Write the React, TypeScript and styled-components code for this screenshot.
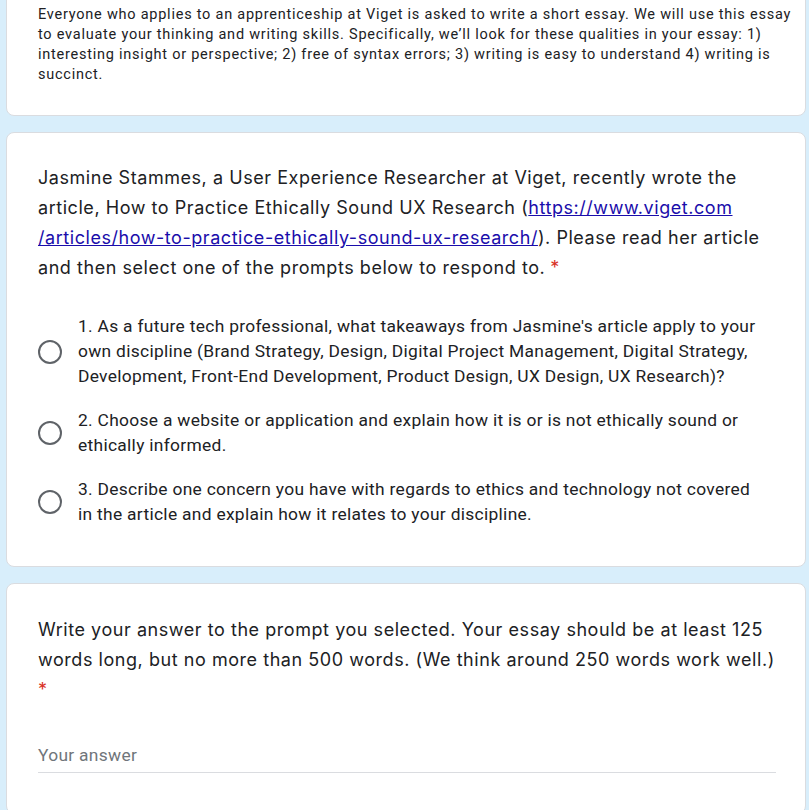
import React from 'react';
import styled, { createGlobalStyle } from 'styled-components';

const GlobalStyle = createGlobalStyle`
  html, body {
    margin: 0;
    padding: 0;
    background: #d8eefb;
  }
  body {
    font-family: Roboto, "Liberation Sans", Arial, sans-serif;
    color: #202124;
    overflow: hidden;
  }
`;

const Page = styled.div`
  display: flex;
  flex-direction: column;
  gap: 16px;
  width: 800px;
  padding-left: 6px;
`;

const Card = styled.section<{ $top?: number; $padTop: number; $padBottom: number }>`
  background: #fff;
  border: 1px solid #dadce0;
  border-radius: 8px;
  margin-top: ${(p) => p.$top ?? 0}px;
  padding: ${(p) => p.$padTop}px 29px ${(p) => p.$padBottom}px 31px;
`;

const Description = styled.p`
  margin: 0;
  font-size: 14.5px;
  line-height: 20px;
  letter-spacing: 0.76px;
  white-space: nowrap;
`;

const Title = styled.div`
  font-family: Inter, Roboto, sans-serif;
  font-size: 18px;
  line-height: 30px;
  letter-spacing: 0.55px;
  white-space: nowrap;
`;

const Link = styled.a`
  color: #1a0dab;
  text-decoration: underline;
`;

const Required = styled.span<{ $gap?: number }>`
  color: #d93025;
  margin-left: ${(p) => p.$gap ?? 5}px;
`;

const Options = styled.div`
  display: flex;
  flex-direction: column;
  gap: 19px;
  margin-top: 31px;
`;

const Option = styled.label`
  display: flex;
  align-items: center;
  gap: 16px;
  cursor: pointer;
`;

const Radio = styled.span`
  flex: none;
  width: 20px;
  height: 20px;
  border: 2px solid #5f6368;
  border-radius: 50%;
`;

const OptionText = styled.span`
  font-size: 17.4px;
  line-height: 25px;
  letter-spacing: 0.3px;
  white-space: nowrap;
`;

const Answer = styled.div`
  margin-top: 38px;
  padding-bottom: 5px;
  border-bottom: 1px solid #dadce0;
  font-size: 17.4px;
  line-height: 24px;
  letter-spacing: 0.3px;
  color: #70757a;
`;

const options: React.ReactNode[] = [
  <>
    1. As a future tech professional, what takeaways from Jasmine's article apply to your
    <br />
    own discipline (Brand Strategy, Design, Digital Project Management, Digital Strategy,
    <br />
    Development, Front-End Development, Product Design, UX Design, UX Research)?
  </>,
  <>
    2. Choose a website or application and explain how it is or is not ethically sound or
    <br />
    ethically informed.
  </>,
  <>
    3. Describe one concern you have with regards to ethics and technology not covered
    <br />
    in the article and explain how it relates to your discipline.
  </>,
];

export default function App() {
  return (
    <>
      <GlobalStyle />
      <Page>
        <Card $top={-20} $padTop={24} $padBottom={30}>
          <Description>
            Everyone who applies to an apprenticeship at Viget is asked to write a short essay. We will use this essay
            <br />
            to evaluate your thinking and writing skills. Specifically, we’ll look for these qualities in your essay: 1)
            <br />
            interesting insight or perspective; 2) free of syntax errors; 3) writing is easy to understand 4) writing is
            <br />
            succinct.
          </Description>
        </Card>

        <Card $padTop={30} $padBottom={39}>
          <Title>
            Jasmine Stammes, a User Experience Researcher at Viget, recently wrote the
            <br />
            article, How to Practice Ethically Sound UX Research (
            <Link href="#">
              https://www.viget.com
              <br />
              /articles/how-to-practice-ethically-sound-ux-research/
            </Link>
            ). Please read her article
            <br />
            and then select one of the prompts below to respond to.
            <Required>*</Required>
          </Title>
          <Options role="radiogroup">
            {options.map((text, i) => (
              <Option key={i}>
                <Radio role="radio" aria-checked="false" />
                <OptionText>{text}</OptionText>
              </Option>
            ))}
          </Options>
        </Card>

        <Card $padTop={31} $padBottom={40}>
          <Title>
            Write your answer to the prompt you selected. Your essay should be at least 125
            <br />
            words long, but no more than 500 words. (We think around 250 words work well.)
            <br />
            <Required $gap={0}>*</Required>
          </Title>
          <Answer>Your answer</Answer>
        </Card>
      </Page>
    </>
  );
}
